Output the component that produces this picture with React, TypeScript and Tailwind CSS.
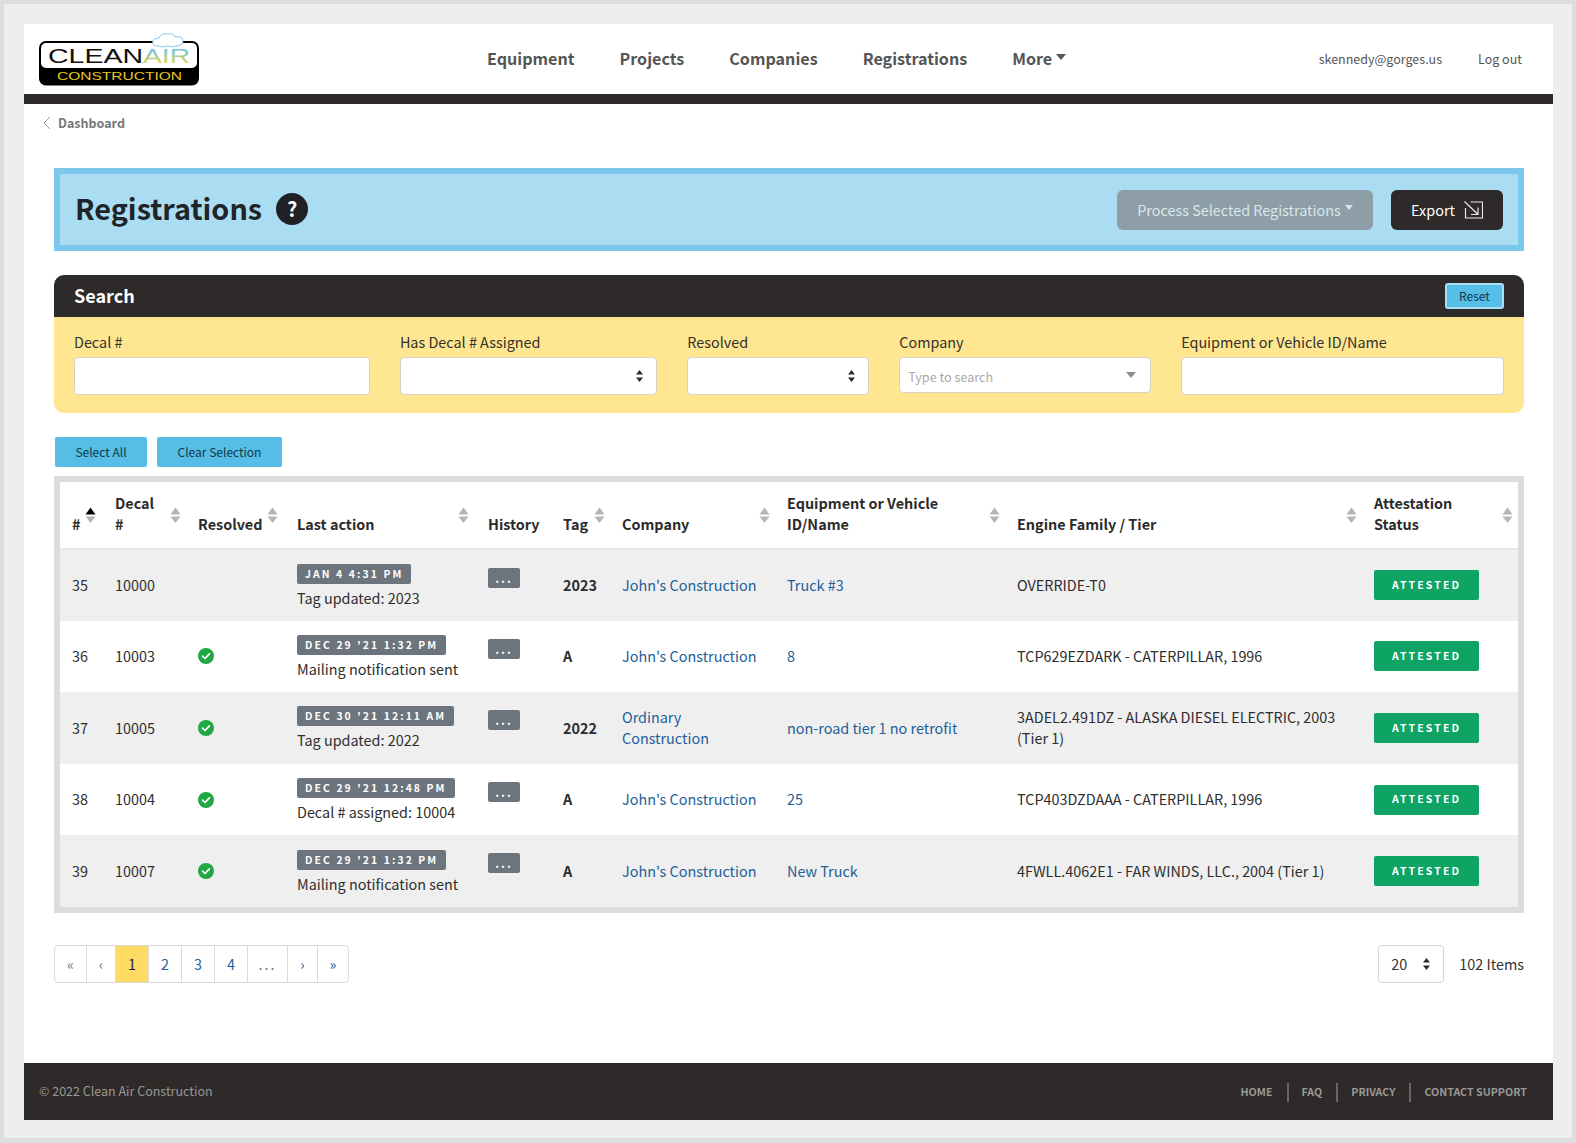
import React from 'react';

const font = { fontFamily: '"Noto Sans CJK SC", "Noto Sans", sans-serif' };

const Caret = ({ className = '' }: { className?: string }) => (
  <span className={`inline-block w-0 h-0 border-x-[4.5px] border-x-transparent border-t-[5px] border-t-current ${className}`} />
);

// little up/down arrows used by selects
const SelectArrows = () => (
  <svg width="9" height="14" viewBox="0 0 9 14" className="text-[#2d2a29]">
    <path d="M4.500 1 8 5.500H1z M4.500 13 1 8.500h7z" fill="currentColor" />
  </svg>
);

const SortArrows = ({ active = false }: { active?: boolean }) => (
  <svg width="11" height="17" viewBox="0 0 11 17" className="shrink-0">
    <path d="M5.500 0.500 10.500 7.500H0.500z" fill={active ? '#000' : '#b5b5b5'} />
    <path d="M5.500 16 0.500 9.500h10z" fill="#b5b5b5" />
  </svg>
);

const CheckDot = () => (
  <svg width="16" height="16" viewBox="0 0 16 16" className="block">
    <circle cx="8" cy="8" r="8" fill="#22a745" />
    <path d="M4.600 8.200 7 10.500l4.400-4.600" fill="none" stroke="#fff" strokeWidth="1.700" strokeLinecap="round" strokeLinejoin="round" />
  </svg>
);

const Logo = () => (
  <svg width="162" height="53" viewBox="0 0 162 53" className="block">
    <defs>
      <linearGradient id="airFill" x1="0" y1="0" x2="0" y2="1">
        <stop offset="0.2" stopColor="#6cc4ec" />
        <stop offset="0.95" stopColor="#f4dc2a" />
      </linearGradient>
    </defs>
    <rect x="1" y="8" width="160" height="44.500" rx="7" fill="#000" />
    <rect x="3" y="10" width="156" height="25" rx="5" fill="#fff" />
    <text x="10" y="30.300" fontFamily="'Liberation Sans', sans-serif" fontSize="21" textLength="95" lengthAdjust="spacingAndGlyphs" fill="#111">CLEAN</text>
    <text x="105" y="30.300" fontFamily="'Liberation Sans', sans-serif" fontSize="21" textLength="47" lengthAdjust="spacingAndGlyphs" fill="url(#airFill)">AIR</text>
    <text x="19" y="46.500" fontFamily="'Liberation Sans', sans-serif" fontSize="11" textLength="125" lengthAdjust="spacingAndGlyphs" fill="#e8c820">CONSTRUCTION</text>
    <path d="M120 13c-4 0-6-2-5-5 1-2 3-3 6-3 1-3 5-5 9-4 3-1 6 0 7 3 5-1 8 1 8 4 0 3-3 5-7 5-3 1-6 1-8 0-3 1-7 1-10 0z" fill="#fff" stroke="#7cc8ec" strokeWidth="1" />
  </svg>
);

const rows = [
  { n: 35, decal: '10000', ok: false, time: 'JAN 4 4:31 PM', action: 'Tag updated: 2023', tag: '2023', company: "John's Construction", equip: 'Truck #3', engine: 'OVERRIDE-T0' },
  { n: 36, decal: '10003', ok: true, time: "DEC 29 '21 1:32 PM", action: 'Mailing notification sent', tag: 'A', company: "John's Construction", equip: '8', engine: 'TCP629EZDARK - CATERPILLAR, 1996' },
  { n: 37, decal: '10005', ok: true, time: "DEC 30 '21 12:11 AM", action: 'Tag updated: 2022', tag: '2022', company: 'Ordinary Construction', equip: 'non-road tier 1 no retrofit', engine: '3ADEL2.491DZ - ALASKA DIESEL ELECTRIC, 2003 (Tier 1)' },
  { n: 38, decal: '10004', ok: true, time: "DEC 29 '21 12:48 PM", action: 'Decal # assigned: 10004', tag: 'A', company: "John's Construction", equip: '25', engine: 'TCP403DZDAAA - CATERPILLAR, 1996' },
  { n: 39, decal: '10007', ok: true, time: "DEC 29 '21 1:32 PM", action: 'Mailing notification sent', tag: 'A', company: "John's Construction", equip: 'New Truck', engine: '4FWLL.4062E1 - FAR WINDS, LLC., 2004 (Tier 1)' },
];

const columns = [
  { label: '#', w: 'w-[43px]', sort: true, active: true, arrow: 'right-[2px]' },
  { label: 'Decal #', w: 'w-[83px]', sort: true, narrow: true },
  { label: 'Resolved', w: 'w-[99px]', sort: true, arrow: 'right-[2px]' },
  { label: 'Last action', w: 'w-[191px]', sort: true, arrow: 'right-[2px]' },
  { label: 'History', w: 'w-[75px]', sort: false },
  { label: 'Tag', w: 'w-[59px]', sort: true },
  { label: 'Company', w: 'w-[165px]', sort: true },
  { label: 'Equipment or Vehicle ID/Name', w: 'w-[230px]', sort: true },
  { label: 'Engine Family / Tier', w: 'w-[357px]', sort: true },
  { label: 'Attestation Status', w: 'w-[156px]', sort: true, narrow: true },
];

const pages = [
  { t: '«', w: 'w-[31px]', c: 'text-[#777]' },
  { t: '‹', w: 'w-[29px]', c: 'text-[#777]' },
  { t: '1', w: 'w-[33px]', c: 'text-[#222] bg-[#ffdb66]' },
  { t: '2', w: 'w-[33px]', c: 'text-[#1d5f99]' },
  { t: '3', w: 'w-[33px]', c: 'text-[#1d5f99]' },
  { t: '4', w: 'w-[33px]', c: 'text-[#1d5f99]' },
  { t: '...', w: 'w-[40px] tracking-[2px]', c: 'text-[#777]' },
  { t: '›', w: 'w-[30px]', c: 'text-[#1d5f99]' },
  { t: '»', w: 'w-[31px]', c: 'text-[#1d5f99]' },
];

const Field = ({ label, w, children }: { label: string; w: string; children?: React.ReactNode }) => (
  <div className={w}>
    <div className="text-[14.4px] leading-[20px] text-[#33302a] mb-[5px]">{label}</div>
    {children ?? <div className="h-[38px] bg-white border border-[#d8d3c4] rounded-[4px]" />}
  </div>
);

const SelectBox = () => (
  <div className="h-[38px] bg-white border border-[#d8d3c4] rounded-[4px] flex items-center justify-end pr-[12px]">
    <SelectArrows />
  </div>
);

export default function App() {
  return (
    <div style={font} className="h-[1143px] bg-[#dddddd] pt-[4px] pl-[4px] pr-[4px] pb-[5px]">
      <div className="h-full bg-[#efeeee] pt-[20px] px-[20px]">
        <div className="bg-white w-[1529px] h-[1096px] flex flex-col">
          {/* Header */}
          <header className="h-[70px] flex items-center shrink-0 pl-[14px] pr-[31px]">
            <Logo />
            <nav className="flex items-center gap-[45px] ml-[287px] text-[16.1px] font-bold text-[#555] pb-[1px]">
              <span>Equipment</span>
              <span>Projects</span>
              <span>Companies</span>
              <span>Registrations</span>
              <span className="flex items-center gap-[4px]">More <Caret className="-mt-[3px] text-[#555] border-x-[5.5px] border-t-[6px]" /></span>
            </nav>
            <div className="ml-auto flex gap-[36px] text-[12.5px] text-[#555]">
              <span>skennedy@gorges.us</span>
              <span>Log out</span>
            </div>
          </header>
          <div className="h-[10px] bg-[#2d2a29] shrink-0" />

          {/* Breadcrumb */}
          <div className="flex items-center h-[38px] pl-[19px] text-[12.5px] font-bold text-[#777]">
            <svg width="8" height="14" viewBox="0 0 8 14" fill="none" stroke="#999" strokeWidth="1" className="mr-[7px]">
              <path d="M7 1 1 7l6 6" />
            </svg>
            Dashboard
          </div>

          <main className="pl-[30px] pr-[29px] pt-[26px] flex-1">
            {/* Title banner */}
            <div className="h-[83px] bg-[#aadcf2] border-[6px] border-[#7cc8ec] flex items-center pl-[15px] pr-[15px]">
              <h1 className="text-[28.8px] font-bold text-[#1f2428] pb-[4px]">Registrations</h1>
              <span className="ml-[14px] -mt-[2px] w-[32px] h-[32px] rounded-full bg-[#1f2124] text-white flex items-center justify-center text-[20px] font-bold">?</span>
              <button className="ml-auto h-[40px] w-[256px] rounded-[6px] bg-[#8d9ea7] text-[#dbe6ea] text-[14.4px] flex items-center justify-center gap-[4px]">
                Process Selected Registrations <Caret className="-mt-[4px]" />
              </button>
              <button className="ml-[18px] h-[40px] w-[112px] rounded-[6px] bg-[#2d2a29] text-white text-[14.4px] flex items-center justify-center gap-[9px]">
                Export
                <svg width="19" height="18" viewBox="0 0 19 18" fill="none" stroke="#e8e8e8" strokeWidth="1.200">
                  <path d="M1.500 7v10h17V1h-12" />
                  <path d="M0.500 0.500 14 13.500M14 6.500v7H7" />
                </svg>
              </button>
            </div>

            {/* Search */}
            <div className="mt-[24px]">
              <div className="h-[42px] bg-[#2d2a29] rounded-t-[10px] flex items-center pl-[20px] pr-[20px]">
                <span className="text-white text-[18px] font-bold pb-[2px]">Search</span>
                <button className="ml-auto w-[59px] h-[26px] bg-[#55bde6] border-2 border-[#a9dff5] rounded-[3px] text-[12px] text-[#12384a] pb-[1px]">Reset</button>
              </div>
              <div className="h-[96px] bg-[#ffe792] rounded-b-[10px] pt-[15px] px-[20px] flex gap-[30px]">
                <Field label="Decal #" w="w-[296px]" />
                <Field label="Has Decal # Assigned" w="w-[257px]"><SelectBox /></Field>
                <Field label="Resolved" w="w-[181.5px] ml-[0.5px]"><SelectBox /></Field>
                <Field label="Company" w="w-[252px] ml-[0.5px]">
                  <div className="h-[36px] bg-white border border-[#d8d3c4] rounded-[4px] flex items-center justify-between pl-[8px] pr-[14px]">
                    <span className="text-[12.6px] text-[#aaa6ab] pt-[5px]">Type to search</span>
                    <Caret className="text-[#8a8a8a] border-x-[5.5px] border-t-[6px]" />
                  </div>
                </Field>
                <Field label="Equipment or Vehicle ID/Name" w="w-[323px]" />
              </div>
            </div>

            {/* Selection buttons */}
            <div className="mt-[24px] flex gap-[10px] pl-px">
              <button className="w-[92px] h-[30px] rounded-[2px] bg-[#55bde6] text-[12px] text-[#12384a]">Select All</button>
              <button className="w-[125px] h-[30px] rounded-[2px] bg-[#55bde6] text-[12px] text-[#12384a]">Clear Selection</button>
            </div>

            {/* Table */}
            <div className="mt-[9px] border-[6px] border-[#dddcdd]">
              <table className="w-full table-fixed border-collapse text-[14.4px] leading-[20.5px] text-[#2e2e2e]">
                <thead>
                  <tr className="h-[67px] border-b-2 border-[#e8e8e8]">
                    {columns.map((c) => (
                      <th key={c.label} className={`${c.w} pl-[12px] pr-[5px] pb-[14px] align-bottom text-left font-bold text-[#2b2b2b] leading-[20.5px]`}>
                        <div className={`relative ${c.narrow ? 'pr-[28px]' : 'pr-[10px]'}`}>
                          {c.label}
                          {c.sort && (
                            <span className={`absolute ${c.arrow ?? 'right-0'} bottom-[10px]`}>
                              <SortArrows active={c.active} />
                            </span>
                          )}
                        </div>
                      </th>
                    ))}
                  </tr>
                </thead>
                <tbody>
                  {rows.map((r, i) => (
                    <tr key={r.n} className={`h-[71.6px] ${i % 2 === 0 ? 'bg-[#efefef]' : 'bg-white'}`}>
                      <td className="pl-[12px]">{r.n}</td>
                      <td className="pl-[12px]">{r.decal}</td>
                      <td className="pl-[12px]">{r.ok && <CheckDot />}</td>
                      <td className="pl-[12px]">
                        <div className="inline-block align-top mt-[1px] h-[20px] leading-[20px] px-[8px] rounded-[2px] bg-[#6c757d] text-white text-[10.4px] font-bold tracking-[2.1px] whitespace-nowrap">{r.time}</div>
                        <div className="mt-[4px] leading-[20px]">{r.action}</div>
                      </td>
                      <td className="pl-[12px] align-top pt-[18px]">
                        <div className="w-[32px] h-[20px] rounded-[2px] bg-[#6c757d] text-white text-[12px] font-bold flex items-center justify-center tracking-[2px] leading-none">...</div>
                      </td>
                      <td className="pl-[12px] font-bold">{r.tag}</td>
                      <td className="pl-[12px] pr-[8px] pb-[2px] text-[#1d5f99] leading-[21px]">{r.company}</td>
                      <td className="pl-[12px] text-[#1d5f99]">{r.equip}</td>
                      <td className="pl-[12px] pr-[10px] pb-[2px] leading-[21px]">{r.engine}</td>
                      <td className="pl-[12px]">
                        <span className="inline-flex items-center justify-center w-[105px] h-[30px] rounded-[2px] bg-[#0ea463] text-white text-[10.5px] font-bold tracking-[2.1px] align-middle">ATTESTED</span>
                      </td>
                    </tr>
                  ))}
                </tbody>
              </table>
            </div>

            {/* Pagination */}
            <div className="mt-[32px] flex items-center justify-between">
              <div className="flex h-[38px] border border-[#dcdcdc] rounded-[4px] overflow-hidden">
                {pages.map((p, i) => (
                  <span key={i} className={`${p.w} ${p.c} flex items-center justify-center text-[14.4px] ${i > 0 ? 'border-l border-[#dcdcdc]' : ''}`}>{p.t}</span>
                ))}
              </div>
              <div className="flex items-center gap-[15px] text-[14.4px] text-[#333]">
                <div className="w-[66px] h-[38px] border border-[#d5d5d5] rounded-[4px] flex items-center justify-between pl-[12px] pr-[12px]">
                  20 <SelectArrows />
                </div>
                <span>102 Items</span>
              </div>
            </div>
          </main>

          {/* Footer */}
          <footer className="h-[57px] bg-[#2d2a29] shrink-0 flex items-center pl-[15px] pr-[26px] text-[#9b9896]">
            <span className="text-[12.5px]">© 2022 Clean Air Construction</span>
            <div className="ml-auto flex items-center text-[10.7px] font-bold pt-[1px]">
              <span>HOME</span>
              <span className="ml-[14px] mr-[13px] w-[2px] h-[19px] bg-[#666]" />
              <span>FAQ</span>
              <span className="ml-[13.5px] mr-[13.5px] w-[2px] h-[19px] bg-[#666]" />
              <span>PRIVACY</span>
              <span className="mx-[13.5px] w-[2px] h-[19px] bg-[#666]" />
              <span>CONTACT SUPPORT</span>
            </div>
          </footer>
        </div>
      </div>
    </div>
  );
}
